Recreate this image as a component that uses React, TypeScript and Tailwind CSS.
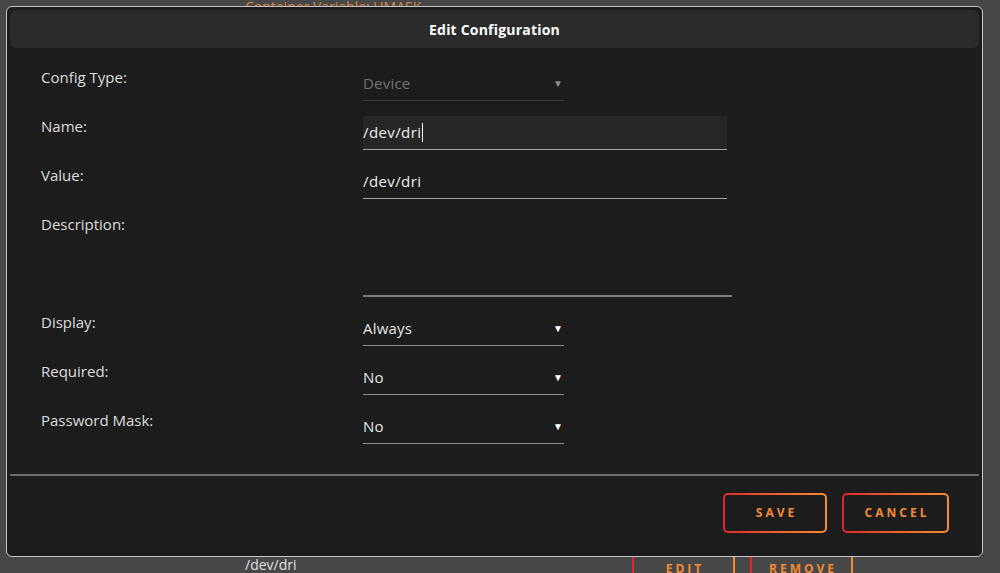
import { ReactNode } from "react";

const font = { fontFamily: '"Open Sans", "Noto Sans", sans-serif' };

function Select({ value, disabled }: { value: string; disabled?: boolean }) {
  return (
    <div
      className={
        "flex h-[34px] w-[201px] items-center justify-between border-b " +
        (disabled ? "border-[#3a3a3a] text-[#727272]" : "border-[#8d8d8d] text-[#e6e6e6]")
      }
    >
      <span className="text-[15px] tracking-[0.2px]">{value}</span>
      <span className={"pr-[1px] text-[10px] " + (disabled ? "text-[#8a8a8a]" : "text-white")}>▼</span>
    </div>
  );
}

function Row({ label, children }: { label: string; children: ReactNode }) {
  return (
    <div className="flex">
      <div className="w-[322px] text-[15px] leading-[20px] text-[#dcdcdc]">{label}</div>
      {children}
    </div>
  );
}

function GradientButton({ label, width }: { label: string; width: string }) {
  return (
    <div className={"h-[40px] rounded-[5px] bg-linear-to-r from-[#df2529] to-[#f88b2c] p-[2px] " + width}>
      <div className="flex h-full items-center justify-center rounded-[3px] bg-[#1c1c1c] pl-[3px] text-[12px] font-bold tracking-[3px] text-[#f28a33]">
        {label}
      </div>
    </div>
  );
}

export default function App() {
  return (
    <div className="relative h-[573px] w-[1000px] overflow-hidden bg-[#474747]" style={font}>
      {/* page behind the dialog */}
      <div className="flex h-full flex-col">
        <div className="pl-[245px] text-[14px] leading-[14px] text-[#d4873f]">Container Variable: UMASK</div>
        <div className="flex-1" />
        <div className="flex h-[24px] items-start pl-[245px]">
          <div className="w-[387px] pt-[6px] text-[14px] leading-[20px] text-[#e0e0e0]">/dev/dri</div>
          <div className="h-[36px] w-[103px] bg-linear-to-r from-[#df2529] to-[#f88b2c] px-[2px] pt-[2px]">
            <div className="flex h-full items-start justify-center bg-[#474747] pl-[3px] pt-[9px] text-[12px] font-bold tracking-[3px] text-[#f28a33]">
              EDIT
            </div>
          </div>
          <div className="ml-[15px] h-[36px] w-[103px] bg-linear-to-r from-[#df2529] to-[#f88b2c] px-[2px] pt-[2px]">
            <div className="flex h-full items-start justify-center bg-[#474747] pl-[3px] pt-[9px] text-[12px] font-bold tracking-[3px] text-[#f28a33]">
              REMOVE
            </div>
          </div>
        </div>
      </div>

      {/* dialog */}
      <div className="absolute left-[6px] top-[6px] flex h-[551px] w-[977px] flex-col rounded-[6px] border border-[#c6c6c6] bg-[#1c1c1c] p-[3px]">
        <div className="flex h-[38px] items-center justify-center rounded-[6px] bg-[#2b2b2b] text-[14px] font-bold tracking-[0.2px] text-white">
          Edit Configuration
        </div>

        <div className="flex flex-col gap-[15px] pl-[31px] pt-[19px]">
          <Row label="Config Type:">
            <Select value="Device" disabled />
          </Row>
          <Row label="Name:">
            <div className="flex h-[34px] w-[364px] items-center border-b border-[#a3a3a3] bg-[#262626] text-[15px] tracking-[0.4px] text-[#ececec]">
              /dev/dri
              <span className="ml-[1px] h-[19px] w-[1px] bg-white" />
            </div>
          </Row>
          <Row label="Value:">
            <div className="flex h-[34px] w-[364px] items-center border-b border-[#a3a3a3] text-[15px] tracking-[0.4px] text-[#ececec]">
              /dev/dri
            </div>
          </Row>
          <Row label="Description:">
            <div className="h-[83px] w-[369px] border-b-2 border-[#7e7e7e]" />
          </Row>
          <Row label="Display:">
            <Select value="Always" />
          </Row>
          <Row label="Required:">
            <Select value="No" />
          </Row>
          <Row label="Password Mask:">
            <Select value="No" />
          </Row>
        </div>

        <div className="mt-[30px] h-[2px] bg-[#6b6b6b]" />

        <div className="mt-[17px] flex justify-end gap-[15px] pr-[30px]">
          <GradientButton label="SAVE" width="w-[104px]" />
          <GradientButton label="CANCEL" width="w-[107px]" />
        </div>
      </div>
    </div>
  );
}
